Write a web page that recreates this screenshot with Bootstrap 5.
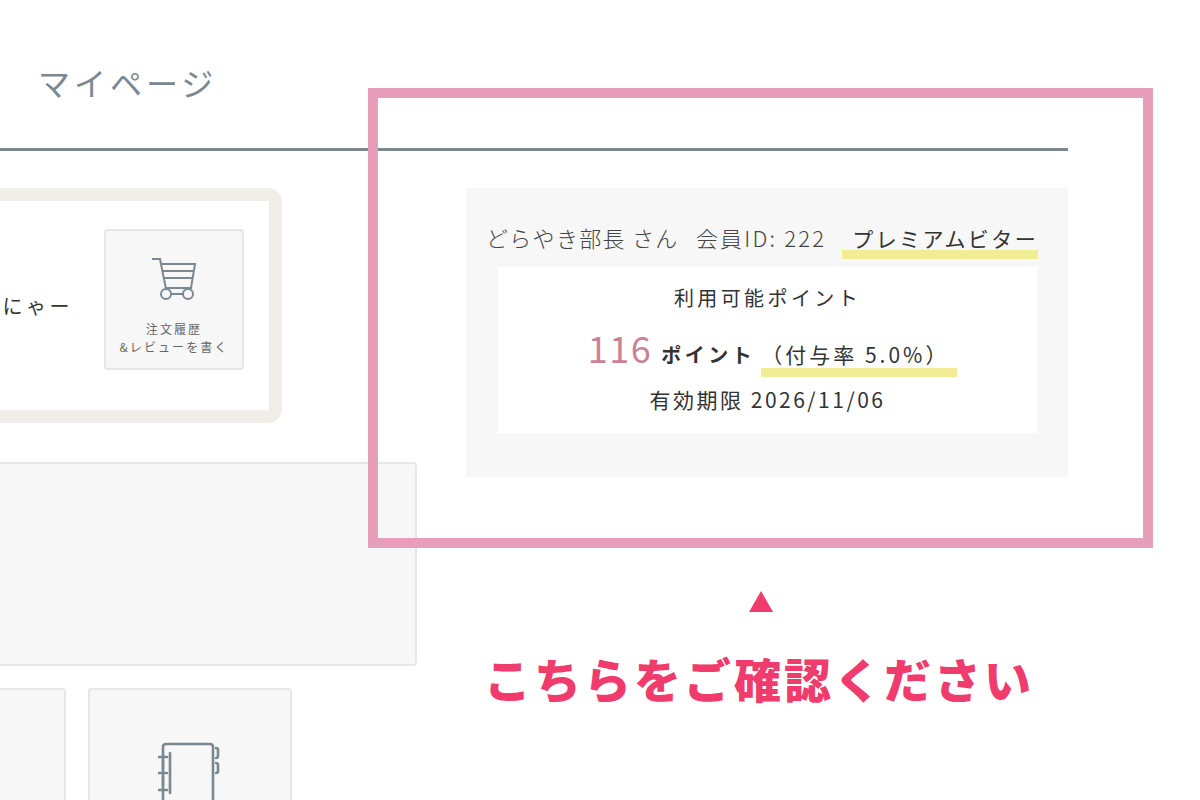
<!DOCTYPE html>
<html lang="ja">
<head>
  <meta charset="UTF-8" />
  <title>マイページ</title>
  <link href="https://cdn.jsdelivr.net/npm/bootstrap@5.3.3/dist/css/bootstrap.min.css" rel="stylesheet" />
  <style>
    body { font-family: "Noto Sans CJK JP", "Noto Sans", sans-serif; background: #fff; color: #333; }
    .mp-page { width: 1200px; height: 800px; overflow: hidden; }
    .mp-head { width: 1068px; height: 151px; border-bottom: 3px solid #7a8892; padding: 58px 0 0 38px; }
    .mp-title { font-size: 32px; line-height: 48px; letter-spacing: 4px; font-weight: 400; color: #7a8892; margin: 0; }
    .mp-main { margin-top: 37px; }
    .mp-left { width: 417px; }
    .mp-greet { width: 302px; height: 235px; margin-left: -20px; background: #fff; border: 13px solid #f1eee9; border-radius: 14px; padding-right: 25px; }
    .mp-nya { font-size: 20px; letter-spacing: 3.5px; color: #333; margin-right: 31px; line-height: 1; }
    .mp-tile { background: #f7f7f7; border: 2px solid #e5e6e6; border-radius: 4px; }
    .mp-tile-order { width: 140px; height: 141px; padding-top: 25px; margin-bottom: 12px; }
    .mp-tile-order span { font-size: 12px; line-height: 18px; letter-spacing: 2.1px; color: #666; margin-top: 20px; white-space: nowrap; }
    .mp-wide { height: 204px; margin: 39px 0 22px -20px; }
    .mp-tile-a { width: 86px; height: 160px; margin-left: -20px; }
    .mp-tile-b { width: 204px; height: 160px; margin-left: 22px; padding: 52px 0 0 68px; }
    .mp-right { width: 602px; margin-left: 49px; }
    .mp-panel { height: 289px; background: #f7f7f7; padding: 32px 0 0 20px; }
    .mp-line { font-size: 22px; line-height: 34px; font-weight: 300; color: #444; letter-spacing: 1.3px; white-space: nowrap; }
    .mp-member { letter-spacing: 2.2px; margin-left: 5px; }
    .mp-rank { font-size: 21px; font-weight: 400; color: #333; letter-spacing: 2.4px; margin-left: 10px; padding-left: 10px; border-bottom: 9px solid #f2ec96; display: inline-block; line-height: 24px; width: 196px; }
    .mp-box { width: 539px; height: 166px; margin: 8px 0 0 12px; background: #fff; }
    .mp-label { font-size: 20px; line-height: 28px; letter-spacing: 3.4px; padding-top: 17px; font-weight: 400; color: #333; }
    .mp-points { margin-top: 15px; height: 54px; padding-left: 10px; }
    .mp-num { font-size: 36px; line-height: 40px; color: #cb8298; letter-spacing: 1.5px; font-weight: 400; margin-right: 9px; }
    .mp-unit { font-size: 20px; font-weight: 700; letter-spacing: 3.5px; color: #333; margin-right: 6px; }
    .mp-rate { display: inline-block; width: 196px; font-size: 21px; line-height: 28px; letter-spacing: 3px; font-weight: 400; color: #333; border-bottom: 9px solid #f2ec96; white-space: nowrap; text-align: left; }
    .mp-limit { font-size: 21px; line-height: 30px; letter-spacing: 2.5px; margin-top: 3px; color: #333; }
    .mp-prompt { width: 590px; margin-top: 114px; }
    .mp-arrow { width: 0; height: 0; border-left: 12px solid transparent; border-right: 12px solid transparent; border-bottom: 21px solid #f03c6c; }
    .mp-call { font-size: 47px; line-height: 66px; font-weight: 900; color: #f03c6c; letter-spacing: 3px; margin: 33px 0 0 -4px; white-space: nowrap; }
    .mp-frame { left: 368px; top: 88px; width: 785px; height: 460px; border: 10px solid #e79fb9; }
  </style>
</head>
<body>
  <div class="mp-page position-relative">
    <div class="mp-head">
      <h1 class="mp-title">マイページ</h1>
    </div>

    <div class="mp-main d-flex">
      <div class="mp-left flex-shrink-0">
        <div class="mp-greet d-flex align-items-center justify-content-end">
          <span class="mp-nya">にゃー</span>
          <a class="mp-tile mp-tile-order d-flex flex-column align-items-center text-center text-decoration-none">
            <svg width="46" height="44" viewBox="0 0 46 44" fill="none" stroke="#7a8892" stroke-width="2">
              <path d="M1 3h8l6 30" />
              <path d="M10 8h34l-4 24H15" />
              <path d="M12 15h31M13 22h29" />
              <circle cx="15" cy="38" r="5" />
              <circle cx="37" cy="38" r="5" />
              <path d="M20 38h12" />
            </svg>
            <span>注文履歴<br />&amp;レビューを書く</span>
          </a>
        </div>
        <div class="mp-tile mp-wide"></div>
        <div class="d-flex">
          <div class="mp-tile mp-tile-a"></div>
          <div class="mp-tile mp-tile-b">
            <svg width="62" height="60" viewBox="0 0 62 60" fill="none" stroke="#7a8892" stroke-width="2.6" stroke-linecap="round">
              <path d="M5 60V5q0-3 3-3h44q3 0 3 3v55" />
              <path d="M12 11v40" />
              <path d="M1 15h8M1 31h8M1 48h8M5 19v8M5 35v9" />
              <path d="M58 6q2 0 2 2v6q0 2-2 2M58 21q2 0 2 2v6q0 2-2 2" />
            </svg>
          </div>
        </div>
      </div>

      <div class="mp-right flex-shrink-0">
        <div class="mp-panel">
          <div class="mp-line">どらやき部長 さん&nbsp; <span class="mp-member">会員ID: 222</span> <span class="mp-rank">プレミアムビター</span></div>
          <div class="mp-box text-center">
            <div class="mp-label">利用可能ポイント</div>
            <div class="mp-points d-flex justify-content-center align-items-baseline">
              <span class="mp-num">116</span>
              <span class="mp-unit">ポイント</span>
              <span class="mp-rate">（付与率 5.0%）</span>
            </div>
            <div class="mp-limit">有効期限 2026/11/06</div>
          </div>
        </div>
        <div class="mp-prompt d-flex flex-column align-items-center">
          <div class="mp-arrow"></div>
          <div class="mp-call">こちらをご確認ください</div>
        </div>
      </div>
    </div>

    <div class="mp-frame position-absolute"></div>
  </div>
  <script src="https://cdn.jsdelivr.net/npm/bootstrap@5.3.3/dist/js/bootstrap.bundle.min.js"></script>
</body>
</html>
